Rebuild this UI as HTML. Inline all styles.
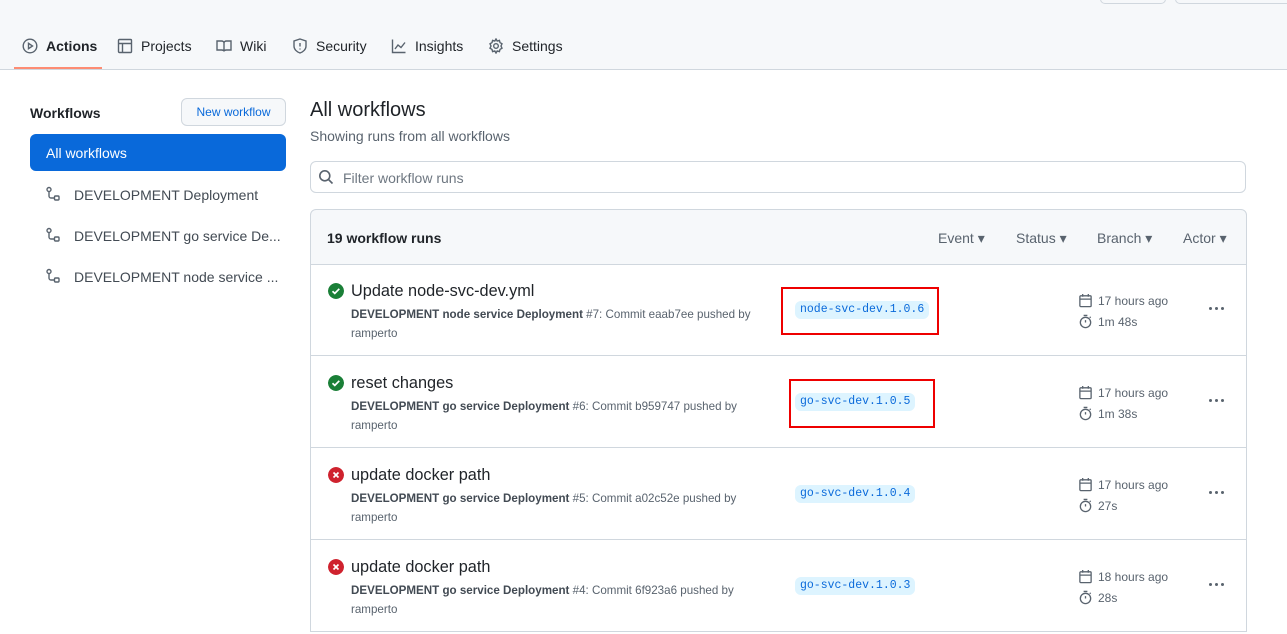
<!DOCTYPE html>
<html><head><meta charset="utf-8"><style>
*{box-sizing:border-box;margin:0;padding:0}
body{width:1287px;height:634px;overflow:hidden;background:#fff;font-family:"Liberation Sans",sans-serif;color:#1f2328;position:relative}
.a{position:absolute;white-space:nowrap}
.hdr{position:absolute;left:0;top:0;width:1287px;height:70px;background:#f6f8fa;border-bottom:1px solid #d0d7de}
.tab{position:absolute;top:38px;font-size:14px;color:#1f2328;display:flex;align-items:center;gap:8px}
.tab svg{width:16px;height:16px;fill:none;stroke:#59636e;stroke-width:1.4}
.side{font-size:14px;color:#424a53}
.row{position:absolute;left:310px;width:937px;height:92px;border:1px solid #d0d7de;border-top:none}
.title{position:absolute;left:40px;top:18px;font-size:16.3px;color:#1f2328}
.sub{position:absolute;left:40px;top:41px;font-size:11.6px;color:#59636e;line-height:19px}
.sub b{color:#424a53}
.st{position:absolute;left:17px;top:19px;width:16px;height:16px;border-radius:50%}
.tag{position:absolute;font-family:"Liberation Mono",monospace;font-size:11.5px;color:#0969da;background:#ddf4ff;border-radius:6px;padding:2px 5px;line-height:14px}
.red{position:absolute;border:2px solid #e00;}
.meta{position:absolute;left:768px;font-size:12px;color:#59636e;display:flex;align-items:center;gap:5px}
.meta svg{width:15px;height:15px;fill:none;stroke:#59636e;stroke-width:1.4}
.dots{position:absolute;left:898px;top:43px;display:flex;gap:3px}
.dots i{width:3px;height:3px;border-radius:50%;background:#59636e}
</style></head><body>
<div class="hdr"></div>
<div class="a" style="left:1100px;top:-6px;width:66px;height:10px;border:1px solid #d0d7de;border-radius:6px;background:#f6f8fa"></div>
<div class="a" style="left:1175px;top:-6px;width:130px;height:10px;border:1px solid #d0d7de;border-radius:6px;background:#f6f8fa"></div>
<div class="tab" style="left:22px;font-weight:bold"><svg viewBox="0 0 16 16"><circle cx="8" cy="8" r="6.8"/><path d="M6.5 5.3v5.4l4-2.7z"/></svg>Actions</div>
<div class="a" style="left:14px;top:67px;width:88px;height:2px;background:#fd8c73"></div>
<div class="tab" style="left:117px"><svg viewBox="0 0 16 16"><rect x="1.5" y="1.5" width="13" height="13" rx="1"/><path d="M1.5 5.5h13M5.5 5.5v9"/></svg>Projects</div>
<div class="tab" style="left:216px"><svg viewBox="0 0 16 16"><path d="M1 3h4.5c1.4 0 2.5.8 2.5 2v8.5c0-1-1-1.5-2.5-1.5H1zM15 3h-4.5C9.1 3 8 3.8 8 5v8.5c0-1 1-1.5 2.5-1.5H15z"/></svg>Wiki</div>
<div class="tab" style="left:292px"><svg viewBox="0 0 16 16"><path d="M8 1l6 2v5c0 3.5-3 6-6 7-3-1-6-3.5-6-7V3z"/><path d="M8 5v3.5M8 10.5v1"/></svg>Security</div>
<div class="tab" style="left:391px"><svg viewBox="0 0 16 16"><path d="M1.5 1.5v13h13M4 11l3-4 3 2.5 4-5"/></svg>Insights</div>
<div class="tab" style="left:488px"><svg viewBox="0 0 16 16"><circle cx="8" cy="8" r="2.3"/><path d="M8 1l1.2 2 2.2-.6.6 2.2 2 1.2-1 2.2 1 2.2-2 1.2-.6 2.2-2.2-.6L8 15l-1.2-2-2.2.6-.6-2.2-2-1.2 1-2.2-1-2.2 2-1.2.6-2.2 2.2.6z"/></svg>Settings</div>

<div class="a" style="left:30px;top:105px;font-size:14px;font-weight:bold;color:#1f2328">Workflows</div>
<div class="a" style="left:181px;top:98px;width:105px;height:28px;border:1px solid #d0d7de;border-radius:6px;background:#f6f8fa;font-size:12px;color:#0969da;text-align:center;line-height:26px">New workflow</div>
<div class="a" style="left:30px;top:134px;width:256px;height:37px;background:#0969da;border-radius:6px;color:#fff;font-size:14px;line-height:38px;padding-left:16px">All workflows</div>
<svg class="a" style="left:45px;top:186px" width="16" height="16" viewBox="0 0 16 16" fill="none" stroke="#59636e" stroke-width="1.4"><circle cx="4" cy="3.5" r="2"/><path d="M4 5.5v4.5a2 2 0 0 0 2 2h3"/><rect x="9.5" y="10" width="4.5" height="4" rx="1"/></svg>
<div class="a side" style="left:74px;top:187px">DEVELOPMENT Deployment</div>
<svg class="a" style="left:45px;top:227px" width="16" height="16" viewBox="0 0 16 16" fill="none" stroke="#59636e" stroke-width="1.4"><circle cx="4" cy="3.5" r="2"/><path d="M4 5.5v4.5a2 2 0 0 0 2 2h3"/><rect x="9.5" y="10" width="4.5" height="4" rx="1"/></svg>
<div class="a side" style="left:74px;top:228px">DEVELOPMENT go service De...</div>
<svg class="a" style="left:45px;top:268px" width="16" height="16" viewBox="0 0 16 16" fill="none" stroke="#59636e" stroke-width="1.4"><circle cx="4" cy="3.5" r="2"/><path d="M4 5.5v4.5a2 2 0 0 0 2 2h3"/><rect x="9.5" y="10" width="4.5" height="4" rx="1"/></svg>
<div class="a side" style="left:74px;top:269px">DEVELOPMENT node service ...</div>

<div class="a" style="left:310px;top:99px;font-size:20px;color:#1f2328">All workflows</div>
<div class="a" style="left:310px;top:128px;font-size:14px;color:#59636e">Showing runs from all workflows</div>
<div class="a" style="left:310px;top:161px;width:936px;height:32px;border:1px solid #d0d7de;border-radius:6px"></div>
<svg class="a" style="left:318px;top:169px" width="16" height="16" viewBox="0 0 16 16" fill="none" stroke="#59636e" stroke-width="1.6"><circle cx="6.8" cy="6.8" r="5"/><path d="M10.5 10.5l4 4"/></svg>
<div class="a" style="left:343px;top:170px;font-size:14px;color:#6e7781">Filter workflow runs</div>

<div class="a" style="left:310px;top:209px;width:937px;height:56px;border:1px solid #d0d7de;border-radius:6px 6px 0 0;background:#f6f8fa"></div>
<div class="a" style="left:327px;top:230px;font-size:14px;font-weight:bold">19 workflow runs</div>
<div class="a" style="left:938px;top:230px;font-size:14px;color:#59636e">Event ▾</div>
<div class="a" style="left:1016px;top:230px;font-size:14px;color:#59636e">Status ▾</div>
<div class="a" style="left:1097px;top:230px;font-size:14px;color:#59636e">Branch ▾</div>
<div class="a" style="left:1183px;top:230px;font-size:14px;color:#59636e">Actor ▾</div>

<div class="row" style="top:264px">
<svg class="st" viewBox="0 0 16 16"><circle cx="8" cy="8" r="8" fill="#1a7f37"/><path d="M4.5 8.2l2.3 2.2 4.5-4.6" stroke="#fff" stroke-width="1.7" fill="none"/></svg>
<div class="title a">Update node-svc-dev.yml</div>
<div class="sub a"><b>DEVELOPMENT node service Deployment</b> #7: Commit eaab7ee pushed by<br>ramperto</div>
<div class="tag" style="left:484px;top:37px">node-svc-dev.1.0.6</div>
<div class="meta" style="top:29px;left:767px"><svg viewBox="0 0 16 16"><rect x="2" y="3" width="12" height="11.5" rx="1"/><path d="M2 6.5h12M5 1v3M11 1v3"/></svg>17 hours ago</div>
<div class="meta" style="top:50px;left:767px"><svg viewBox="0 0 16 16"><circle cx="8" cy="9" r="5.5"/><path d="M8 9V6.5M6 1.5h4M12.5 4l1-1"/></svg>1m 48s</div>
<div class="dots"><i></i><i></i><i></i></div>
</div>
<div class="row" style="top:356px">
<svg class="st" viewBox="0 0 16 16"><circle cx="8" cy="8" r="8" fill="#1a7f37"/><path d="M4.5 8.2l2.3 2.2 4.5-4.6" stroke="#fff" stroke-width="1.7" fill="none"/></svg>
<div class="title a">reset changes</div>
<div class="sub a"><b>DEVELOPMENT go service Deployment</b> #6: Commit b959747 pushed by<br>ramperto</div>
<div class="tag" style="left:484px;top:37px">go-svc-dev.1.0.5</div>
<div class="meta" style="top:29px;left:767px"><svg viewBox="0 0 16 16"><rect x="2" y="3" width="12" height="11.5" rx="1"/><path d="M2 6.5h12M5 1v3M11 1v3"/></svg>17 hours ago</div>
<div class="meta" style="top:50px;left:767px"><svg viewBox="0 0 16 16"><circle cx="8" cy="9" r="5.5"/><path d="M8 9V6.5M6 1.5h4M12.5 4l1-1"/></svg>1m 38s</div>
<div class="dots"><i></i><i></i><i></i></div>
</div>
<div class="row" style="top:448px">
<svg class="st" viewBox="0 0 16 16"><circle cx="8" cy="8" r="8" fill="#cf222e"/><path d="M5.5 5.5l5 5M10.5 5.5l-5 5" stroke="#fff" stroke-width="1.7"/></svg>
<div class="title a">update docker path</div>
<div class="sub a"><b>DEVELOPMENT go service Deployment</b> #5: Commit a02c52e pushed by<br>ramperto</div>
<div class="tag" style="left:484px;top:37px">go-svc-dev.1.0.4</div>
<div class="meta" style="top:29px;left:767px"><svg viewBox="0 0 16 16"><rect x="2" y="3" width="12" height="11.5" rx="1"/><path d="M2 6.5h12M5 1v3M11 1v3"/></svg>17 hours ago</div>
<div class="meta" style="top:50px;left:767px"><svg viewBox="0 0 16 16"><circle cx="8" cy="9" r="5.5"/><path d="M8 9V6.5M6 1.5h4M12.5 4l1-1"/></svg>27s</div>
<div class="dots"><i></i><i></i><i></i></div>
</div>
<div class="row" style="top:540px">
<svg class="st" viewBox="0 0 16 16"><circle cx="8" cy="8" r="8" fill="#cf222e"/><path d="M5.5 5.5l5 5M10.5 5.5l-5 5" stroke="#fff" stroke-width="1.7"/></svg>
<div class="title a">update docker path</div>
<div class="sub a"><b>DEVELOPMENT go service Deployment</b> #4: Commit 6f923a6 pushed by<br>ramperto</div>
<div class="tag" style="left:484px;top:37px">go-svc-dev.1.0.3</div>
<div class="meta" style="top:29px;left:767px"><svg viewBox="0 0 16 16"><rect x="2" y="3" width="12" height="11.5" rx="1"/><path d="M2 6.5h12M5 1v3M11 1v3"/></svg>18 hours ago</div>
<div class="meta" style="top:50px;left:767px"><svg viewBox="0 0 16 16"><circle cx="8" cy="9" r="5.5"/><path d="M8 9V6.5M6 1.5h4M12.5 4l1-1"/></svg>28s</div>
<div class="dots"><i></i><i></i><i></i></div>
</div>

<div class="red" style="left:781px;top:287px;width:158px;height:48px"></div>
<div class="red" style="left:789px;top:379px;width:146px;height:49px"></div>
</body></html>
